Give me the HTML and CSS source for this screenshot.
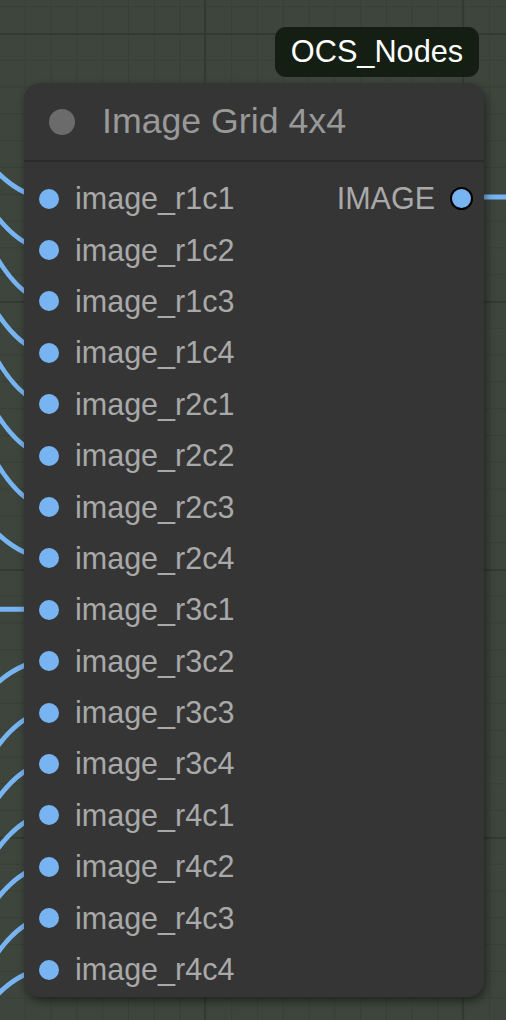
FILE: index.html
```html
<!DOCTYPE html>
<html>
<head>
<meta charset="utf-8">
<link rel="stylesheet" href="styles.css">
</head>
<body>
<div class="canvas">
  <svg class="wires" width="506" height="1020" viewBox="0 0 506 1020">
    <g fill="none" stroke="#78b4f2" stroke-width="5">
      <path d="M-71 60 Q-11 198 49 198"/>
      <path d="M-71 75.4 Q-11 249.4 49 249.4"/>
      <path d="M-71 72.8 Q-11 300.8 49 300.8"/>
      <path d="M-71 142.2 Q-11 352.2 49 352.2"/>
      <path d="M-71 169.6 Q-11 403.6 49 403.6"/>
      <path d="M-71 239 Q-11 455 49 455"/>
      <path d="M-71 278.4 Q-11 506.4 49 506.4"/>
      <path d="M-71 425.8 Q-11 557.8 49 557.8"/>
      <path d="M-71 609.2 L49 609.2"/>
      <path d="M-71 780.6 Q-11 660.6 49 660.6"/>
      <path d="M-71 898 Q-11 712 49 712"/>
      <path d="M-71 955.4 Q-11 763.4 49 763.4"/>
      <path d="M-71 1000.8 Q-11 814.8 49 814.8"/>
      <path d="M-71 1040.2 Q-11 866.2 49 866.2"/>
      <path d="M-71 1109.6 Q-11 917.6 49 917.6"/>
      <path d="M-71 1107 Q-11 969 49 969"/>
      <path d="M461 197 L520 197"/>
    </g>
  </svg>

  <div class="badge">OCS_Nodes</div>

  <div class="node">
    <div class="node-title">
      <span class="title-dot"></span>
      <span class="title-text">Image Grid 4x4</span>
    </div>
    <div class="node-body">
      <div class="row"><span class="slot"></span><span class="label">image_r1c1</span><span class="out-label">IMAGE</span><span class="slot slot-out"></span></div>
      <div class="row"><span class="slot"></span><span class="label">image_r1c2</span></div>
      <div class="row"><span class="slot"></span><span class="label">image_r1c3</span></div>
      <div class="row"><span class="slot"></span><span class="label">image_r1c4</span></div>
      <div class="row"><span class="slot"></span><span class="label">image_r2c1</span></div>
      <div class="row"><span class="slot"></span><span class="label">image_r2c2</span></div>
      <div class="row"><span class="slot"></span><span class="label">image_r2c3</span></div>
      <div class="row"><span class="slot"></span><span class="label">image_r2c4</span></div>
      <div class="row"><span class="slot"></span><span class="label">image_r3c1</span></div>
      <div class="row"><span class="slot"></span><span class="label">image_r3c2</span></div>
      <div class="row"><span class="slot"></span><span class="label">image_r3c3</span></div>
      <div class="row"><span class="slot"></span><span class="label">image_r3c4</span></div>
      <div class="row"><span class="slot"></span><span class="label">image_r4c1</span></div>
      <div class="row"><span class="slot"></span><span class="label">image_r4c2</span></div>
      <div class="row"><span class="slot"></span><span class="label">image_r4c3</span></div>
      <div class="row"><span class="slot"></span><span class="label">image_r4c4</span></div>
    </div>
  </div>
</div>
</body>
</html>
```

FILE: styles.css
```css
html, body {
  margin: 0;
  padding: 0;
  background: #3d453c;
}

.canvas {
  position: relative;
  width: 506px;
  height: 1020px;
  overflow: hidden;
  font-family: "Liberation Sans", Arial, sans-serif;
  background-color: #3d453c;
  background-image:
    linear-gradient(90deg, #333a32 0 2px, transparent 2px),
    linear-gradient(180deg, #333a32 0 2px, transparent 2px),
    linear-gradient(90deg, #383f37 0 1px, transparent 1px),
    linear-gradient(180deg, #383f37 0 1px, transparent 1px);
  background-size: 258px 100%, 100% 268px, 25.8px 100%, 100% 26.8px;
  background-position: 204px 0, 0 33px, 24.8px 0, 0 6.2px;
}

.wires {
  position: absolute;
  left: 0;
  top: 0;
}

.badge {
  position: absolute;
  left: 275px;
  top: 27px;
  width: 204px;
  height: 50px;
  box-sizing: border-box;
  border-radius: 11px;
  background: #141e12;
  color: #ffffff;
  font-size: 30.7px;
  display: flex;
  align-items: center;
  justify-content: center;
}

.node {
  position: absolute;
  left: 24px;
  top: 83px;
  width: 460px;
  height: 914px;
  background: #353535;
  border-radius: 16px;
  box-shadow: 2px 4px 8px rgba(0, 0, 0, 0.45);
  display: flex;
  flex-direction: column;
}

.node-title {
  height: 77px;
  border-bottom: 2px solid #2b2b2b;
  display: flex;
  align-items: center;
  padding-left: 25px;
  gap: 27px;
}

.title-dot {
  width: 26px;
  height: 26px;
  border-radius: 50%;
  background: #6b6b6b;
  flex: none;
}

.title-text {
  color: #999999;
  font-size: 35.7px;
}

.node-body {
  padding-top: 11px;
  display: flex;
  flex-direction: column;
}

.row {
  height: 51.4px;
  display: flex;
  align-items: center;
  padding-left: 15px;
  padding-right: 11px;
}

.slot {
  width: 20px;
  height: 20px;
  border-radius: 50%;
  background: #78b4f2;
  flex: none;
}

.label {
  color: #a9a9a9;
  font-size: 30.5px;
  margin-left: 16px;
  flex: 1;
}

.out-label {
  color: #a9a9a9;
  font-size: 30.5px;
  margin-right: 15px;
}

.slot-out {
  width: 23px;
  height: 23px;
  box-sizing: border-box;
  border: 2.5px solid #000000;
}
```
